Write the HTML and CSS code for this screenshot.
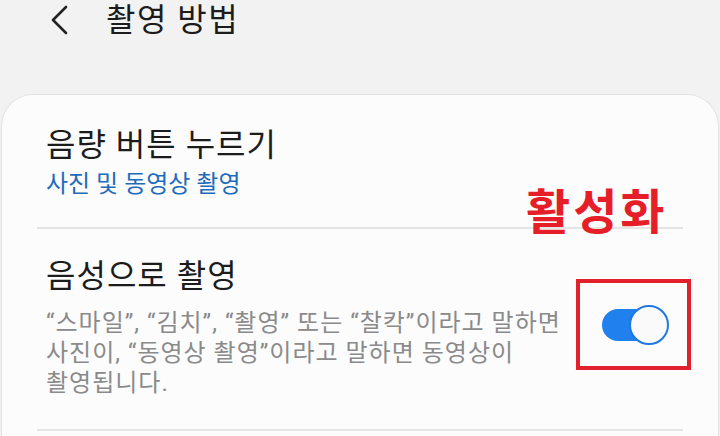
FILE: index.html
```html
<!DOCTYPE html>
<html lang="ko">
<head>
<meta charset="utf-8">
<title>촬영 방법</title>
<link rel="stylesheet" href="styles.css">
</head>
<body>
<header class="topbar">
  <svg class="back" viewBox="0 0 18 30" aria-hidden="true">
    <path d="M16 2 L3 15 L16 28" fill="none" stroke="#222" stroke-width="2.6" stroke-linecap="round" stroke-linejoin="round"/>
  </svg>
  <h1 class="title">촬영 방법</h1>
</header>
<main class="card">
  <section class="item item-first">
    <div class="item-title">음량 버튼 누르기</div>
    <div class="item-sub">사진 및 동영상 촬영</div>
  </section>
  <div class="divider"></div>
  <section class="item item-row">
    <div class="item-text">
      <div class="item-title">음성으로 촬영</div>
      <div class="item-desc">“스마일”, “김치”, “촬영” 또는 “찰칵”이라고 말하면 사진이, “동영상 촬영”이라고 말하면 동영상이 촬영됩니다.</div>
    </div>
    <div class="switch" role="switch" aria-checked="true">
      <span class="track"></span>
      <span class="thumb"></span>
    </div>
  </section>
  <div class="divider"></div>
</main>
<div class="note-label">활성화</div>
<div class="note-box"></div>
</body>
</html>
```
FILE: styles.css
```css
html, body {
  margin: 0;
  padding: 0;
}
body {
  width: 720px;
  height: 436px;
  overflow: hidden;
  background: #f2f2f2;
  font-family: Roboto, "Noto Sans CJK KR", sans-serif;
  position: relative;
}
.topbar {
  display: flex;
  align-items: center;
  height: 40px;
  padding-left: 50px;
  margin-bottom: 54px;
}
.back {
  width: 18px;
  height: 30px;
  margin-right: 38px;
}
.title {
  margin: 0;
  font-size: 32px;
  font-weight: 400;
  line-height: 40px;
  letter-spacing: 1.5px;
  color: #1c1c1c;
}
.card {
  margin: 0 1px;
  height: 342px;
  box-sizing: border-box;
  background: #fcfcfc;
  border: 1px solid #e2e2e2;
  border-bottom: 0;
  border-radius: 32px 32px 0 0;
  padding: 0 35px;
}
.item {
  padding: 0 9px;
}
.item-first {
  padding-top: 31px;
  padding-bottom: 27px;
}
.item-title {
  font-size: 32px;
  line-height: 38px;
  letter-spacing: 1px;
  color: #1c1c1c;
}
.item-sub {
  margin-top: 4px;
  font-size: 24px;
  line-height: 32px;
  color: #1d6cbb;
}
.divider {
  height: 2px;
  background: #e5e5e5;
}
.item-row {
  display: flex;
  align-items: center;
  justify-content: space-between;
  padding-top: 28px;
  padding-bottom: 31px;
}
.item-text {
  width: 535px;
}
.item-desc {
  margin-top: 13px;
  font-size: 24px;
  line-height: 30px;
  letter-spacing: 1px;
  color: #8a8a8a;
  word-break: keep-all;
}
.switch {
  position: relative;
  width: 67px;
  height: 40px;
  margin-right: 5px;
  margin-bottom: 6px;
}
.track {
  position: absolute;
  left: 0;
  top: 4px;
  width: 62px;
  height: 32px;
  border-radius: 16px;
  background: #1f80ee;
}
.thumb {
  position: absolute;
  right: 0;
  top: 0;
  width: 40px;
  height: 40px;
  box-sizing: border-box;
  border-radius: 50%;
  background: #fafafa;
  border: 2px solid #1f78e0;
}
.note-label {
  position: absolute;
  left: 526px;
  top: 187px;
  font-size: 48px;
  line-height: 52px;
  font-weight: 700;
  letter-spacing: 3px;
  color: #e61e28;
}
.note-box {
  position: absolute;
  left: 576px;
  top: 279px;
  width: 115px;
  height: 91px;
  box-sizing: border-box;
  border: 4px solid #e3212b;
}
```
